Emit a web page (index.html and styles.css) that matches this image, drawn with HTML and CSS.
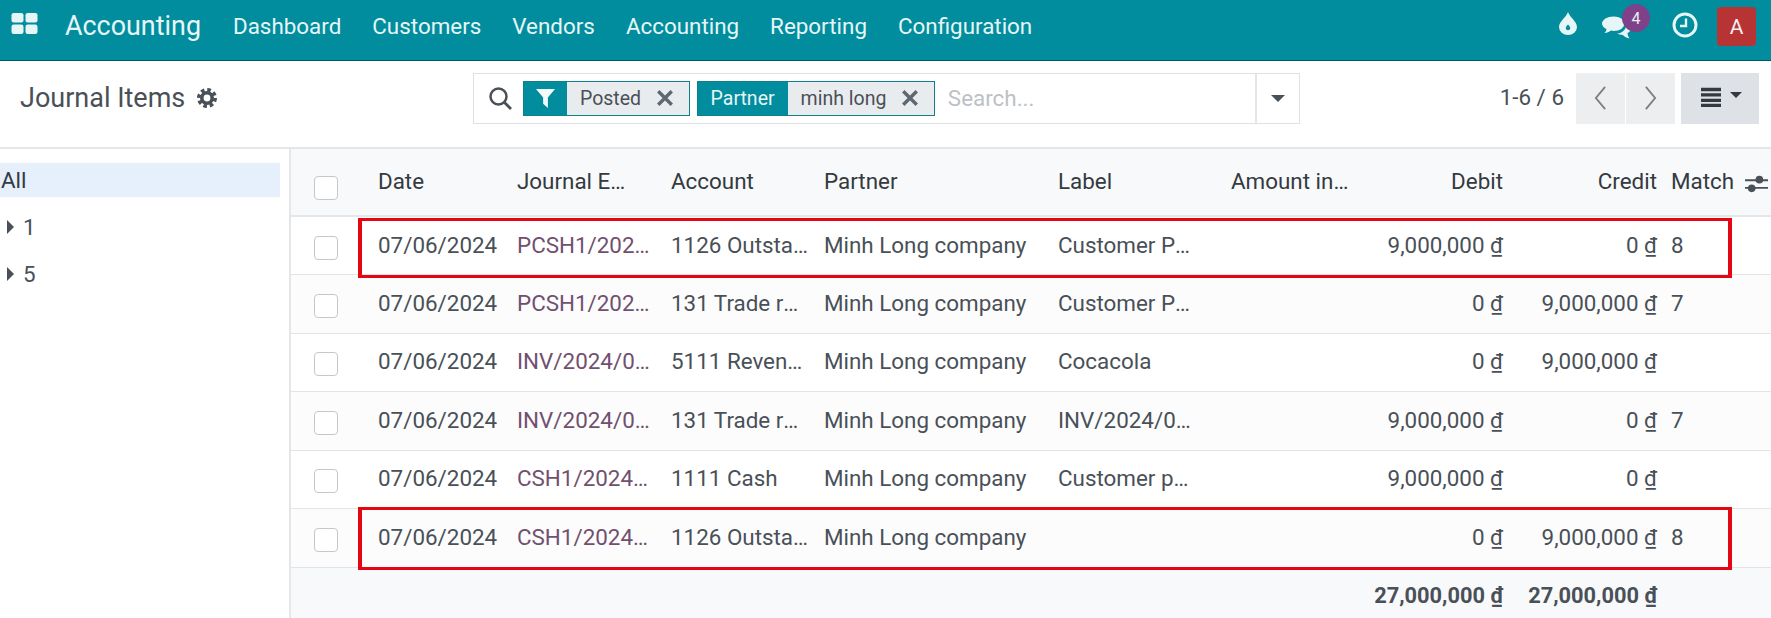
FILE: index.html
```html
<!DOCTYPE html>
<html lang="en">
<head>
<meta charset="utf-8">
<title>Journal Items</title>
<link rel="stylesheet" href="styles.css">
</head>
<body>
<div class="app">
  <header class="navbar">
    <svg class="apps-icon" viewBox="0 0 26 21"><rect x="0" y="0" width="12" height="9.5" rx="2.2"/><rect x="14" y="0" width="12" height="9.5" rx="2.2"/><rect x="0" y="11.5" width="12" height="9.5" rx="2.2"/><rect x="14" y="11.5" width="12" height="9.5" rx="2.2"/></svg>
    <span class="brand">Accounting</span>
    <nav class="menu">
      <a>Dashboard</a><a>Customers</a><a>Vendors</a><a>Accounting</a><a>Reporting</a><a>Configuration</a>
    </nav>
    <div class="systray">
      <svg class="tray-drop" viewBox="0 0 18 23"><path fill-rule="evenodd" d="M9 0C10.5 5 18 9.5 18 15A9 8 0 0 1 0 15C0 9.5 7.5 5 9 0ZM9 12.5C7.5 14 6.8 15 6.8 16A2.2 2.2 0 0 0 11.2 16C11.2 15 10.5 14 9 12.5Z"/></svg>
      <div class="tray-chat">
        <svg viewBox="0 0 30 23"><path d="M12 0C18.6 0 23 3.3 23 7.5S18.6 15 12 15C11 15 10 14.9 9.2 14.7C7.5 16.2 5 17 2.5 17.3C4 15.8 4.6 14.3 4.6 13C2 11.7 0 9.8 0 7.5 0 3.3 5.4 0 12 0Z"/><path d="M25 6.5C28 8 30 10 30 12.3 30 14.4 28.5 16.2 26.4 17.2 26.4 18.8 27.2 21 28.5 22.8 25.8 22.3 23.2 21 21.6 19.2 19.6 19.2 17 18.8 15.2 17.8 21 17.6 26 13 25 6.5Z"/></svg>
        <span class="badge">4</span>
      </div>
      <svg class="tray-clock" viewBox="0 0 26 26"><circle cx="13" cy="13" r="11" fill="none" stroke-width="3"/><path d="M14 6.5V14H8" fill="none" stroke-width="2.4"/></svg>
      <span class="avatar">A</span>
    </div>
  </header>

  <section class="panel">
    <div class="title-wrap">
      <h1 class="title">Journal Items</h1>
      <svg class="gear" viewBox="0 0 20 20"><circle cx="10" cy="10" r="5.2" fill="none" stroke="#495057" stroke-width="3.6"/><circle cx="10" cy="10" r="8.2" fill="none" stroke="#495057" stroke-width="3.6" stroke-dasharray="3.6 2.84"/></svg>
    </div>
    <div class="search">
      <svg class="search-icon" viewBox="0 0 23 23"><circle cx="9.5" cy="9.5" r="8" fill="none" stroke="#495057" stroke-width="2.5"/><path d="M15.5 15.5L22 22" stroke="#495057" stroke-width="2.8"/></svg>
      <div class="facet">
        <span class="facet-key facet-icon"><svg viewBox="0 0 20 20" class="filter"><path d="M0 0H20L12.5 9V20L7.5 15.5V9Z"/></svg></span>
        <span class="facet-val">Posted</span>
        <svg class="x" viewBox="0 0 16 16"><path d="M2 2L14 14M14 2L2 14"/></svg>
      </div>
      <div class="facet">
        <span class="facet-key">Partner</span>
        <span class="facet-val">minh long</span>
        <svg class="x" viewBox="0 0 16 16"><path d="M2 2L14 14M14 2L2 14"/></svg>
      </div>
      <span class="placeholder">Search...</span>
      <span class="search-drop"><i class="caret"></i></span>
    </div>
    <div class="pager">
      <span class="pager-text">1-6 / 6</span>
      <div class="pager-btns">
        <span class="pbtn"><svg viewBox="0 0 14 26"><path d="M12 1L2 13L12 25"/></svg></span>
        <span class="pbtn"><svg viewBox="0 0 14 26"><path d="M2 1L12 13L2 25"/></svg></span>
      </div>
      <span class="view-btn">
        <svg class="list-icon" viewBox="0 0 24 24"><path d="M0 1H24V5H0ZM0 7.5H24V11.5H0ZM0 14H24V18H0ZM0 20H24V24H0Z"/></svg>
        <i class="caret caret-dark"></i>
      </span>
    </div>
  </section>

  <main class="content">
    <aside class="side">
      <div class="side-item active">All</div>
      <div class="side-item"><i class="arrow"></i>1</div>
      <div class="side-item"><i class="arrow"></i>5</div>
    </aside>
    <div class="list">
      <table class="grid">
        <colgroup>
          <col class="c-check"><col class="c-date"><col class="c-journal"><col class="c-account"><col class="c-partner"><col class="c-label"><col class="c-amount"><col class="c-debit"><col class="c-credit"><col>
        </colgroup>
        <thead>
          <tr>
            <th><i class="box"></i></th><th>Date</th><th class="short">Journal Entry</th><th>Account</th><th>Partner</th><th>Label</th><th>Amount in Currency</th><th class="num">Debit</th><th class="num">Credit</th><th>Match</th>
          </tr>
        </thead>
        <tbody>
          <tr><td><i class="box"></i></td><td>07/06/2024</td><td class="link">PCSH1/2024/00001</td><td>1126 Outstanding Receipts</td><td>Minh Long company</td><td class="lbl">Customer Payment</td><td></td><td class="num">9,000,000 ₫</td><td class="num">0 ₫</td><td>8</td></tr>
          <tr><td><i class="box"></i></td><td>07/06/2024</td><td class="link">PCSH1/2024/00001</td><td>131 Trade receivable</td><td>Minh Long company</td><td class="lbl">Customer Payment</td><td></td><td class="num">0 ₫</td><td class="num">9,000,000 ₫</td><td>7</td></tr>
          <tr><td><i class="box"></i></td><td>07/06/2024</td><td class="link">INV/2024/00001</td><td>5111 Revenue from sales</td><td>Minh Long company</td><td class="lbl">Cocacola</td><td></td><td class="num">0 ₫</td><td class="num">9,000,000 ₫</td><td></td></tr>
          <tr><td><i class="box"></i></td><td>07/06/2024</td><td class="link">INV/2024/00001</td><td>131 Trade receivable</td><td>Minh Long company</td><td class="lbl">INV/2024/00001</td><td></td><td class="num">9,000,000 ₫</td><td class="num">0 ₫</td><td>7</td></tr>
          <tr><td><i class="box"></i></td><td>07/06/2024</td><td class="link">CSH1/2024/00001</td><td>1111 Cash</td><td>Minh Long company</td><td class="lbl">Customer payment</td><td></td><td class="num">9,000,000 ₫</td><td class="num">0 ₫</td><td></td></tr>
          <tr><td><i class="box"></i></td><td>07/06/2024</td><td class="link">CSH1/2024/00001</td><td>1126 Outstanding Receipts</td><td>Minh Long company</td><td class="lbl"></td><td></td><td class="num">0 ₫</td><td class="num">9,000,000 ₫</td><td>8</td></tr>
        </tbody>
        <tfoot>
          <tr><td></td><td></td><td></td><td></td><td></td><td></td><td></td><td class="num">27,000,000 ₫</td><td class="num">27,000,000 ₫</td><td></td></tr>
        </tfoot>
      </table>
      <svg class="sliders" viewBox="0 0 24 20"><path d="M0 6H24M0 14H24" stroke="#495057" stroke-width="2"/><circle cx="15" cy="5.5" r="4" fill="#495057"/><circle cx="7" cy="14.5" r="4" fill="#495057"/></svg>
      <div class="mark mark-1"></div>
      <div class="mark mark-2"></div>
    </div>
  </main>
</div>
</body>
</html>
```

FILE: styles.css
```css
* { box-sizing: border-box; }
html, body { margin: 0; height: 100%; background: #fff; }
body { font-family: Roboto, "Noto Sans", sans-serif; color: #495057; }
.app { height: 618px; overflow: hidden; display: flex; flex-direction: column; }

.navbar { height: 61px; flex: none; display: flex; align-items: center; background: #018d9d; border-bottom: 1px solid #04565e; color: #e6f6f7; position: relative; }
.apps-icon { width: 27px; height: 21px; margin: -14px 0 0 11px; fill: #e6f6f7; flex: none; }
.brand { font-size: 26.9px; margin-left: 27px; margin-top: -8px; }
.menu { display: flex; gap: 31px; margin-left: 32px; font-size: 22.4px; margin-top: -9px; }
.systray { margin-left: auto; display: flex; align-items: flex-start; height: 60px; }
.tray-drop { width: 18px; height: 23px; fill: #e6f6f7; margin: 12px 25px 0 0; }
.tray-chat { width: 29px; height: 23px; margin: 16px 41px 0 0; position: relative; }
.tray-chat svg { width: 29px; height: 23px; fill: #e6f6f7; display: block; }
.badge { position: absolute; left: 20px; top: -12px; width: 28px; height: 28px; border-radius: 50%; background: #7d4289; color: #eee; font-size: 16px; display: flex; align-items: center; justify-content: center; }
.tray-clock { width: 26px; height: 26px; margin: 12px 19px 0 0; stroke: #e6f6f7; }
.avatar { width: 39px; height: 39px; margin: 7px 15px 0 0; background: #b83333; border-radius: 4px; color: #f2f2f2; font-size: 21px; display: flex; align-items: center; justify-content: center; }

.panel { height: 88px; flex: none; display: grid; grid-template-columns: 473px 827px 1fr; padding-top: 12px; border-bottom: 2px solid #e4e6e8; align-items: start; }
.title-wrap { display: flex; align-items: center; padding-left: 20px; height: 49px; }
.title { margin: 0; font-weight: 400; font-size: 27px; color: #495057; }
.gear { width: 20px; height: 20px; margin-left: 12px; }
.search { height: 51px; border: 1px solid #dee2e6; display: flex; align-items: center; position: relative; }
.search-icon { width: 23px; height: 23px; margin-left: 15px; flex: none; }
.facet { height: 35px; display: flex; align-items: center; background: #e9ecef; border: 1px solid #0f7f8a; margin-right: 7px; font-size: 19.5px; }
.search-icon + .facet { margin-left: 11px; }
.facet-key { background: #018d9d; color: #e6f6f7; height: 100%; display: flex; align-items: center; padding: 0 13px; margin: 0; }
.facet-icon { width: 43px; justify-content: center; padding: 0; }
.filter { width: 19px; height: 19px; fill: #f4fbfb; }
.facet-val { padding: 0 15px 0 13px; color: #495057; }
.x { width: 18px; height: 18px; margin-right: 14.5px; margin-top: -1px; stroke: #5f6770; stroke-width: 3; fill: none; }
.placeholder { color: #bcc1c6; font-size: 22.4px; margin-left: 6px; margin-top: -1px; }
.search-drop { position: absolute; right: 0; top: 0; bottom: 0; width: 44px; border-left: 2px solid #e4e6e8; display: flex; align-items: center; justify-content: center; }
.caret { width: 0; height: 0; border-left: 7px solid transparent; border-right: 7px solid transparent; border-top: 7px solid #495057; display: block; }
.pager { display: flex; justify-content: flex-end; align-items: center; height: 51px; padding-right: 12px; }
.pager-text { font-size: 22.4px; margin-right: 12px; margin-top: -3px; color: #495057; }
.pager-btns { display: flex; gap: 1px; margin-right: 6px; }
.pbtn { width: 49px; height: 51px; background: #eceef0; display: flex; align-items: center; justify-content: center; padding-bottom: 2px; }
.pbtn svg { width: 13px; height: 24px; fill: none; stroke: #7a7f85; stroke-width: 2; }
.view-btn { width: 78px; height: 51px; background: #dee2e6; display: flex; align-items: center; justify-content: center; gap: 7px; padding-bottom: 4px; }
.list-icon { width: 24px; height: 20px; fill: #343a40; }
.caret-dark { border-left-width: 6px; border-right-width: 6px; border-top-width: 6px; border-top-color: #343a40; margin-top: -4px; }

.content { flex: 1; display: flex; min-height: 0; }
.side { width: 291px; flex: none; border-right: 2px solid #e4e6e8; padding: 14px 9px 0 0; font-size: 22.4px; color: #495057; }
.side-item { height: 34px; line-height: 34px; margin-bottom: 13px; display: flex; align-items: center; padding-left: 1px; }
.side-item.active { background: #e6f0fd; color: #343a40; margin-bottom: 13px; }
.arrow { width: 0; height: 0; border-top: 7px solid transparent; border-bottom: 7px solid transparent; border-left: 7px solid #495057; margin: 0 9px 0 6px; }

.list { flex: 1; position: relative; min-width: 0; }
.grid { width: 100%; table-layout: fixed; border-collapse: collapse; font-size: 22.4px; }
.c-check { width: 80px; }
.c-date { width: 139px; }
.c-journal { width: 154px; }
.c-account { width: 153px; }
.c-partner { width: 234px; }
.c-label { width: 173px; }
.c-amount { width: 134px; }
.c-debit { width: 152px; }
.c-credit { width: 154px; }
.grid th, .grid td { padding: 0 7px 2px; white-space: nowrap; overflow: hidden; text-overflow: ellipsis; text-align: left; font-weight: 400; }
.grid th:first-child, .grid td:first-child { padding: 0 0 0 23px; }
.grid th.short { padding-right: 29px; }
.grid td.lbl { padding-right: 24px; }
.grid thead tr { height: 67px; background: #f8f9fa; }
.grid th { color: #343a40; border-bottom: 2px solid #e4e6e8; padding-bottom: 3px; }
.grid tbody tr { height: 58.5px; border-bottom: 1px solid #e2e4e7; background: #fff; }
.grid tbody tr:nth-child(even) { background: #fcfcfd; }
.grid tfoot tr { height: 57px; background: #f8f9fa; }
.grid tfoot td { font-weight: 700; font-size: 21.8px; padding-bottom: 0; }
.grid .num { text-align: right; }
.link { color: #71506f; }
.box { display: block; width: 24px; height: 24px; border: 1px solid #c4c8cc; border-radius: 4px; background: #fff; margin-top: 4px; }
.grid th .box { margin-top: 11px; }
.sliders { position: absolute; left: 1454px; top: 25px; width: 23px; height: 20px; }
.mark { position: absolute; left: 67px; width: 1374px; border-style: solid; border-color: #e30613; border-width: 3px 4px; pointer-events: none; }
.mark-1 { top: 69px; height: 60px; }
.mark-2 { top: 358px; height: 63px; }
```
